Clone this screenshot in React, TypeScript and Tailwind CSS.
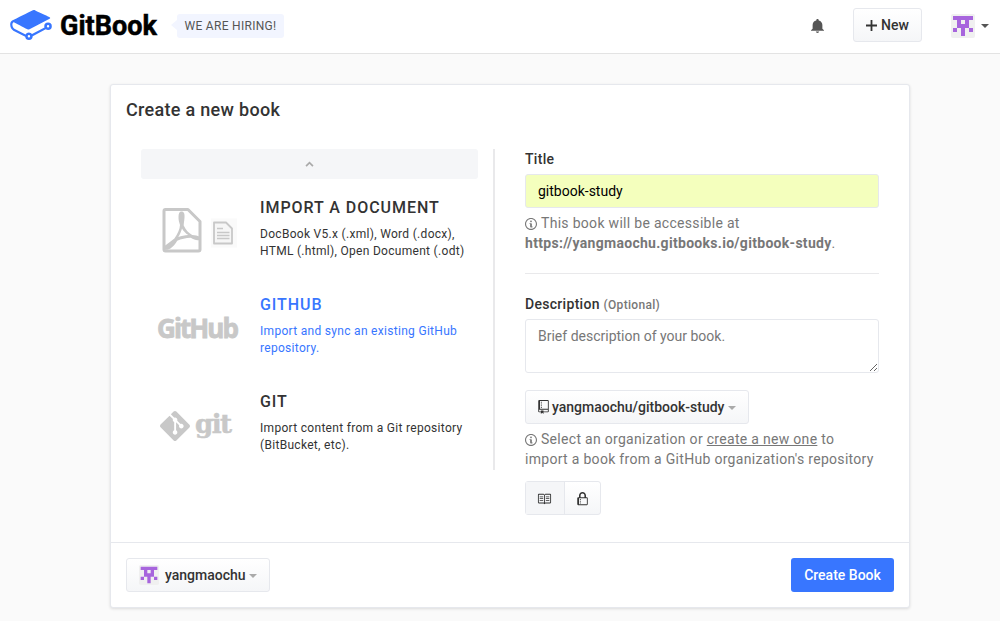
import React from 'react';

const INFO =
  'M6.3 5.69a.942.942 0 0 1-.28-.7c0-.28.09-.52.28-.7.19-.18.42-.28.7-.28.28 0 .52.09.7.28.18.19.28.42.28.7 0 .28-.09.52-.28.7a1 1 0 0 1-.7.3c-.28 0-.52-.11-.7-.3zM8 7.99c-.02-.25-.11-.48-.31-.69-.2-.19-.42-.3-.69-.31H6c-.27.02-.48.13-.69.31-.2.2-.3.44-.31.69h1v3c.02.27.11.5.31.69.2.2.42.31.69.31h1c.27 0 .48-.11.69-.31.2-.19.3-.42.31-.69H8V7.98v.01zM7 2.3c-3.14 0-5.7 2.54-5.7 5.68 0 3.14 2.56 5.7 5.7 5.7s5.7-2.55 5.7-5.7c0-3.15-2.56-5.69-5.7-5.69v.01zM7 .98c3.86 0 7 3.14 7 7s-3.14 7-7 7-7-3.12-7-7 3.14-7 7-7z';
const REPO =
  'M4 9H3V8h1v1zm0-3H3v1h1V6zm0-2H3v1h1V4zm0-2H3v1h1V2zm8-1v12c0 .55-.45 1-1 1H6v2l-1.5-1.5L3 16v-2H1c-.55 0-1-.45-1-1V1c0-.55.45-1 1-1h10c.55 0 1 .45 1 1zm-1 10H1v2h2v-1h3v1h5v-2zm0-10H2v9h9V1z';
const BOOK =
  'M3 5h4v1H3V5zm0 3h4V7H3v1zm0 2h4V9H3v1zm11-5h-4v1h4V5zm0 2h-4v1h4V7zm0 2h-4v1h4V9zm2-6v9c0 .55-.45 1-1 1H9.5l-1 1-1-1H2c-.55 0-1-.45-1-1V3c0-.55.45-1 1-1h5.5l1 1 1-1H15c.55 0 1 .45 1 1zm-8 .5L7.5 3H2v9h6V3.5zm7-.5H9.5l-.5.5V12h6V3z';
const LOCK =
  'M4 13H3v-1h1v1zm8-6v7c0 .55-.45 1-1 1H1c-.55 0-1-.45-1-1V7c0-.55.45-1 1-1h1V4c0-2.2 1.8-4 4-4s4 1.8 4 4v2h1c.55 0 1 .45 1 1zM3.8 6h4.41V4c0-1.22-.98-2.2-2.2-2.2-1.22 0-2.2.98-2.2 2.2v2H3.8zM11 7H2v7h9V7zM4 8H3v1h1V8zm0 2H3v1h1v-1z';
const GIT =
  'M23.546 10.93L13.067.452c-.604-.603-1.582-.603-2.188 0L8.708 2.627l2.76 2.76c.645-.215 1.379-.07 1.889.441.516.515.658 1.258.438 1.9l2.658 2.66c.645-.223 1.387-.078 1.9.435.721.72.721 1.884 0 2.604-.719.719-1.881.719-2.6 0-.539-.541-.674-1.337-.404-1.996L12.86 8.955v6.525c.176.086.342.203.488.348.713.721.713 1.883 0 2.6-.719.721-1.889.721-2.609 0-.719-.719-.719-1.879 0-2.598.182-.18.387-.316.605-.406V8.835c-.217-.091-.424-.222-.6-.401-.545-.545-.676-1.342-.396-2.009L7.636 3.7.45 10.881c-.6.605-.6 1.584 0 2.189l10.48 10.477c.604.604 1.582.604 2.186 0l10.43-10.43c.605-.603.605-1.582 0-2.187';
const GITBOOK =
  'M10.802 17.77a.703.703 0 11-.002 1.406.703.703 0 01.002-1.406m11.024-4.347a.703.703 0 11.001-1.406.703.703 0 01-.001 1.406m0-2.876a2.176 2.176 0 00-2.174 2.174c0 .233.039.465.115.691l-7.181 3.823a2.165 2.165 0 00-1.784-.937c-.829 0-1.584.475-1.95 1.216l-6.451-3.402c-.682-.358-1.192-1.48-1.138-2.502.028-.533.212-.947.493-1.107.178-.1.392-.092.62.027l.042.023c1.71.9 7.304 3.847 7.54 3.956.363.169.565.237 1.185-.057l11.564-6.014c.17-.064.368-.227.368-.474 0-.342-.354-.477-.355-.477-.658-.315-1.669-.788-2.655-1.25-2.108-.987-4.497-2.105-5.546-2.655-.906-.474-1.635-.074-1.765.006l-.252.125C7.78 6.048 1.46 9.178 1.1 9.397.457 9.789.058 10.57.006 11.539c-.08 1.537.703 3.14 1.824 3.727l6.822 3.518a2.175 2.175 0 002.15 1.862 2.177 2.177 0 002.173-2.14l7.514-4.073c.38.298.853.461 1.337.461A2.176 2.176 0 0024 12.72a2.176 2.176 0 00-2.174-2.174';

const button =
  'flex items-center h-[34px] rounded-[3px] border border-[#e6e8ed] bg-linear-to-b from-white to-[#f5f6f8] text-sm font-medium text-[#333]';

function Avatar({ className }: { className: string }) {
  return (
    <svg viewBox="0 0 24 24" className={className}>
      <rect width="24" height="24" rx="2" fill="#f0f0f0" />
      <path
        fill="#a765dd"
        d="M2 2h20v4h-4v8h-4v8h-4v-8H6V6H2zM10 6v4h4V6zM2 14h4v4H2zM18 14h4v4h-4z"
        fillRule="evenodd"
      />
    </svg>
  );
}

function Caret({ className }: { className: string }) {
  return (
    <svg viewBox="0 0 8 4" className={'w-2 h-1 ' + className} fill="currentColor">
      <path d="M0 0h8L4 4z" />
    </svg>
  );
}

function InfoIcon() {
  return (
    <svg viewBox="0 0 14 16" className="inline-block w-3 h-[14px] mr-1 align-[-3px]" fill="currentColor">
      <path d={INFO} />
    </svg>
  );
}

function DocumentArt() {
  return (
    <svg viewBox="0 0 80 48" className="w-20 h-12 ml-[2px]" fill="none" stroke="#c8c8c8">
      <path
        strokeWidth="3"
        strokeLinejoin="round"
        d="M5.500 3.500h22.500l12 12v28a1.500 1.500 0 0 1-1.500 1.500h-33a1.500 1.500 0 0 1-1.500-1.500v-38.500a1.500 1.500 0 0 1 1.500-1.500z"
      />
      <path
        fill="#c8c8c8"
        stroke="none"
        fillRule="evenodd"
        d="M21.500 5.500c2.600 0 3.300 2.500 3 6-.2 3.500-.8 6-.8 8 2 4.500 5 7.500 8.500 9.500 3 .2 5.500.6 7 1.600v3.400c-2.500.6-5.500-.4-8.500-2.200-5 .3-9.500 1.300-13.500 2.900-3.500 6-8 10-13 9v-3.500c3.300-2.400 6.700-5 10.200-7.700 3.300-4.800 5.400-9.300 5.600-13.500-.8-2.500-1.600-5-1.500-8 0-3.500.8-5.500 3-5.500zM22 22.500c-.8 2.600-1.900 5.800-3.700 8.500 3-.9 6.500-1.700 10-2-2.800-1.700-4.800-3.800-6.300-6.500z"
      />
      <rect x="51" y="12.500" width="26" height="29" fill="#fafafa" stroke="none" />
      <path strokeWidth="1.800" strokeLinejoin="round" fill="#f6f6f6" d="M54 16.500h12l6 6v15H54z" />
      <path strokeWidth="1.500" d="M57 22.500h6M57 26.500h12.500M57 29.500h12.500M57 32.500h12.500" />
    </svg>
  );
}

function Choice(props: { art: React.ReactNode; title: string; lines: string[]; active?: boolean }) {
  return (
    <div className={'flex h-[97px] ' + (props.active ? 'text-[#3876ff]' : 'text-[#333]')}>
      <div className="flex w-[119px] h-[78px] items-center shrink-0 pt-[2px] pl-[17px]">{props.art}</div>
      <div className="pt-[6px]">
        <h2 className="text-base leading-[24px] font-medium tracking-[0.950px]">{props.title}</h2>
        <p className="mt-[6px] text-xs leading-[17px] tracking-[0.300px]">
          {props.lines[0]}
          <br />
          {props.lines[1]}
        </p>
      </div>
    </div>
  );
}

export default function App() {
  return (
    <div className="h-[621px] overflow-hidden bg-[#fafafa] font-['Roboto',sans-serif] text-sm text-[#333]">
      <header className="flex h-[54px] items-center border-b border-[#e3e3e3] bg-white pl-[10px] pr-[11px] pb-[3px]">
        <svg viewBox="0 3.350 24 17.300" className="w-[42px] h-[30px]" fill="#3876ff">
          <path d={GITBOOK} />
        </svg>
        <span className="ml-2 mt-[2px] w-[111px] text-[27px] leading-[30px] font-bold text-black [-webkit-text-stroke:0.500px_#000]">GitBook</span>
        <svg viewBox="0 0 6 10" className="w-[6px] h-[10px]" fill="#f2f5ff">
          <path d="M6 0v10L0 5z" />
        </svg>
        <span className="flex mt-[2px] h-6 w-[107px] justify-center items-center rounded-[3px] bg-[#f2f5ff] text-xs tracking-[0.300px] text-[#555]">
          WE ARE HIRING!
        </span>
        <svg viewBox="4 2.500 16 19.500" className="ml-auto mt-[2px] w-[13px] h-[14px]" fill="#555" preserveAspectRatio="none">
          <path d="M12 22c1.100 0 2-.9 2-2h-4c0 1.100.9 2 2 2zm6-6v-5c0-3.070-1.640-5.640-4.500-6.320V4c0-.83-.67-1.500-1.500-1.500s-1.500.67-1.500 1.500v.68C7.630 5.360 6 7.920 6 11v5l-2 2v1h16v-1l-2-2z" />
        </svg>
        <div className={button + ' ml-[29px] w-[69px] justify-center'}>
          <svg viewBox="0 0 11 11" className="mr-1 w-[11px] h-[11px]" stroke="#333" strokeWidth="1.800">
            <path d="M5.500 0v11M0 5.500h11" />
          </svg>
          New
        </div>
        <Avatar className="ml-[29px] mt-[2px] w-6 h-6" />
        <Caret className="ml-[6px] mt-[1px] text-[#555]" />
      </header>

      <main className="ml-[110px] mt-[30px] flex h-[524px] w-[800px] flex-col rounded-[3px] border border-[#e6e8ed] bg-white shadow-[0_1px_3px_rgba(0,0,0,0.12)]">
        <h1 className="pl-[15px] pt-[12px] text-lg leading-[25px] font-medium tracking-[0.300px]">Create a new book</h1>
        <div className="flex flex-1 pl-[30px] pt-[27px]">
          <section className="h-[321px] w-[354px] border-r-2 border-[#e9e9eb] pr-[15px]">
            <div className="mb-[11px] flex h-[30px] items-center justify-center rounded-[3px] bg-[#f5f6f8]">
              <svg viewBox="0 0 10 7" className="w-[9px] h-[6px]" fill="none" stroke="#aaa" strokeWidth="2">
                <path d="M1 6l4-4 4 4" />
              </svg>
            </div>
            <Choice
              art={<DocumentArt />}
              title="IMPORT A DOCUMENT"
              lines={['DocBook V5.x (.xml), Word (.docx),', 'HTML (.html), Open Document (.odt)']}
            />
            <Choice
              active
              art={
                <span className="-ml-[1px] mt-[2px] font-['Open_Sans',sans-serif] text-[26px] leading-[30px] font-bold tracking-[-1.900px] text-[#c8c8c8] [-webkit-text-stroke:0.800px_#c8c8c8]">
                  GitHub
                </span>
              }
              title="GITHUB"
              lines={['Import and sync an existing GitHub', 'repository.']}
            />
            <Choice
              art={
                <div className="flex items-center pt-[4px] text-[#c8c8c8]">
                  <svg viewBox="0 0 24 24" className="ml-[2px] w-[30px] h-[30px]" fill="currentColor">
                    <path d={GIT} />
                  </svg>
                  <span className="ml-[5px] -mt-[4px] font-['DejaVu_Serif',serif] text-[26px] leading-[30px] font-bold tracking-[-1.500px] [-webkit-text-stroke:0.500px_#c8c8c8]">
                    git
                  </span>
                </div>
              }
              title="GIT"
              lines={['Import content from a Git repository', '(BitBucket, etc).']}
            />
          </section>

          <section className="ml-[30px] w-[354px] tracking-[0.300px]">
            <div className="h-5 leading-5 font-medium">Title</div>
            <div className="mt-[5px] flex h-[34px] items-center rounded-[3px] border border-[#e6e8ed] bg-[#f4ffbd] pl-3 tracking-normal text-black">
              gitbook-study
            </div>
            <p className="mt-[5px] h-10 leading-5 text-[#777]">
              <InfoIcon />
              This book will be accessible at
              <br />
              <b className="font-bold">https://yangmaochu.gitbooks.io/gitbook-study</b>.
            </p>
            <div className="mt-5 border-t border-[#e9e9eb]" />
            <div className="mt-5 h-5 leading-5 font-medium">
              Description <span className="text-xs text-[#777]">(Optional)</span>
            </div>
            <textarea
              className="mt-[5px] block h-[54px] w-full resize-y rounded-[3px] border border-[#e6e8ed] bg-white px-3 py-[6px] leading-5 tracking-normal placeholder:text-[#777]"
              placeholder="Brief description of your book."
            />
            <div className={button + ' mt-[17px] w-[224px] pl-3 tracking-normal'}>
              <svg viewBox="0 0 12 16" className="mr-[3px] w-[11px] h-[14px]" fill="#333">
                <path d={REPO} />
              </svg>
              yangmaochu/gitbook-study
              <Caret className="ml-1 mt-[2px] text-[#aaa]" />
            </div>
            <p className="mt-[5px] h-10 whitespace-nowrap leading-5 text-[#777]">
              <InfoIcon />
              Select an organization or <span className="underline">create a new one</span> to
              <br />
              import a book from a GitHub organization's repository
            </p>
            <div className={button + ' mt-3 w-[76px]'}>
              <div className="flex h-full w-[39px] items-center justify-center border-r border-[#e6e8ed] bg-[#f5f6f8] pr-[1px]">
                <svg viewBox="0 0 17 16" className="mt-[1px] w-[15px] h-[14px]" fill="#333">
                  <path d={BOOK} />
                </svg>
              </div>
              <div className="flex flex-1 justify-center">
                <svg viewBox="0 0 12 16" className="mt-[1px] w-[11px] h-[14px]" fill="#333">
                  <path d={LOCK} />
                </svg>
              </div>
            </div>
          </section>
        </div>
        <footer className="flex h-[65px] items-center justify-between border-t border-[#e6e8ed] px-[15px]">
          <div className={button + ' w-[144px] pl-3'}>
            <Avatar className="mr-[6px] w-5 h-5" />
            yangmaochu
            <Caret className="ml-[3px] mt-[2px] text-[#aaa]" />
          </div>
          <div className="flex h-[34px] w-[103px] items-center justify-center rounded-[3px] bg-[#3876ff] font-medium text-white">
            Create Book
          </div>
        </footer>
      </main>
    </div>
  );
}
